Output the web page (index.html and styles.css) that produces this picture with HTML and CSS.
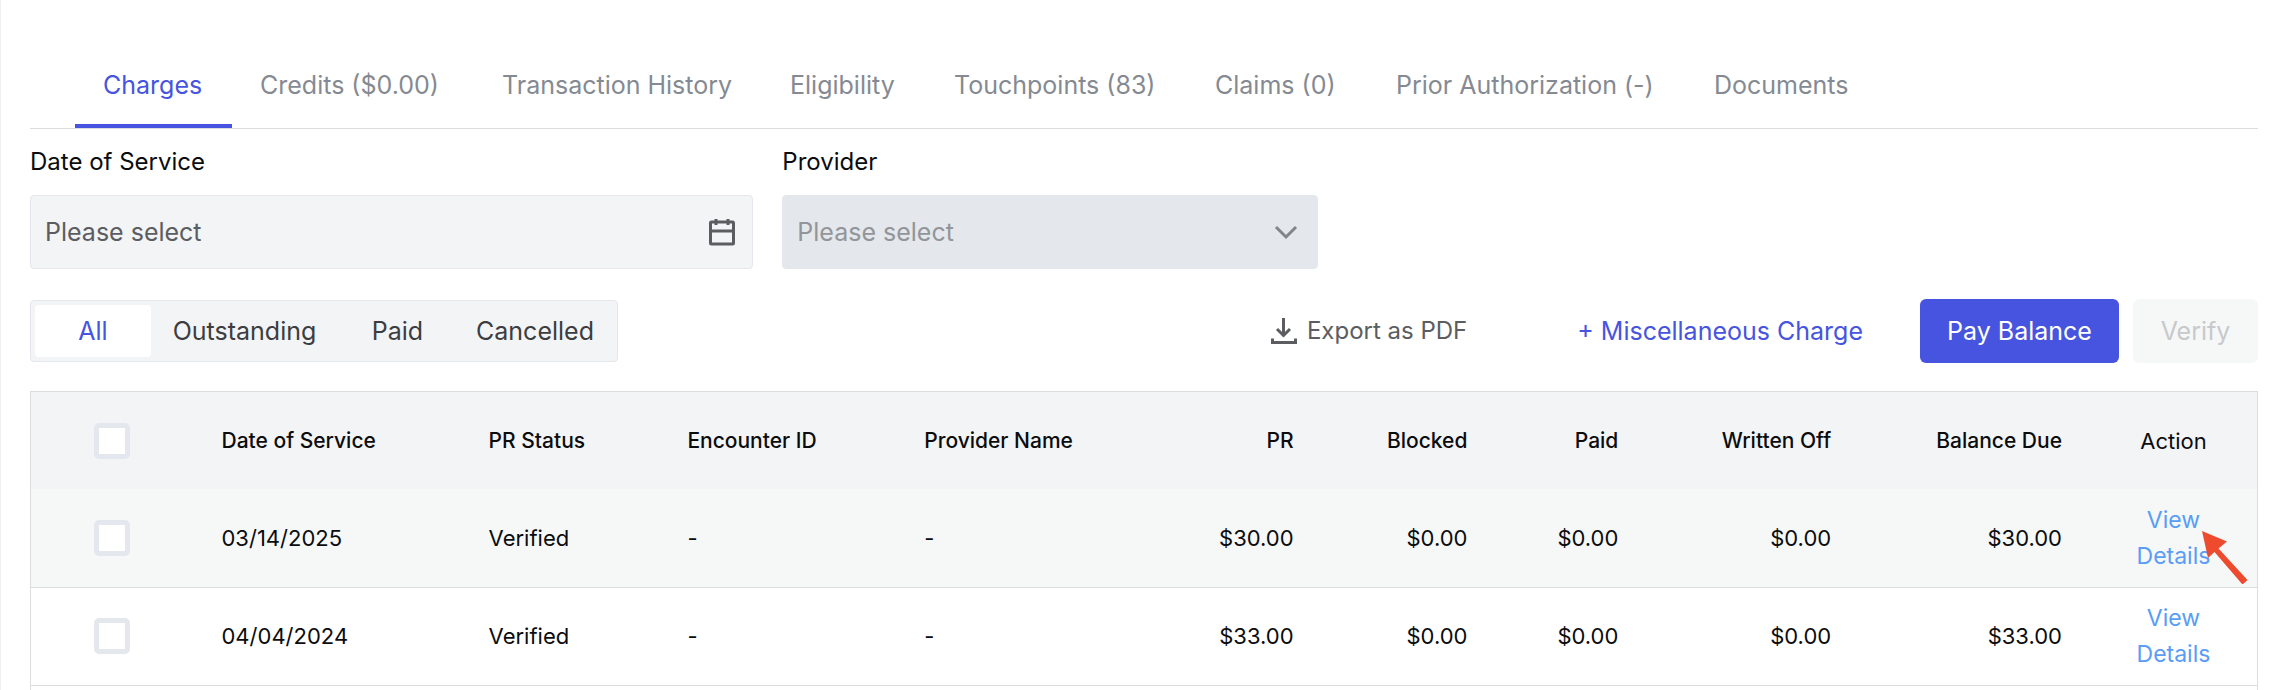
FILE: index.html
```html
<!DOCTYPE html>
<html lang="en">
<head>
<meta charset="utf-8">
<title>Charges</title>
<link rel="stylesheet" href="styles.css">
</head>
<body>
<main class="page">
  <nav class="tabs" aria-label="Patient billing">
    <a class="tab tab-active" href="#charges" aria-current="page">Charges</a>
    <a class="tab" href="#credits">Credits ($0.00)</a>
    <a class="tab" href="#history">Transaction History</a>
    <a class="tab" href="#eligibility">Eligibility</a>
    <a class="tab" href="#touchpoints">Touchpoints (83)</a>
    <a class="tab" href="#claims">Claims (0)</a>
    <a class="tab" href="#authorization">Prior Authorization (-)</a>
    <a class="tab" href="#documents">Documents</a>
  </nav>

  <form class="filters">
    <div class="field field-date">
      <label class="field-label" for="service-date">Date of Service</label>
      <div class="control">
        <input class="control-input" id="service-date" type="text" placeholder="Please select">
        <svg class="icon-calendar" viewBox="0 0 28 28" fill="none" stroke="currentColor" stroke-width="3" aria-hidden="true">
          <rect x="2.5" y="4" width="23" height="22" rx="1"/>
          <path d="M2.5 13h23M8 1v6M20 1v6"/>
        </svg>
      </div>
    </div>
    <div class="field field-provider">
      <label class="field-label" for="provider">Provider</label>
      <div class="control control-disabled">
        <select class="control-input" id="provider" disabled>
          <option>Please select</option>
        </select>
        <svg class="icon-chevron" viewBox="0 0 24 16" fill="none" stroke="currentColor" stroke-width="3" aria-hidden="true">
          <path d="M2 3l10 10 10-10"/>
        </svg>
      </div>
    </div>
  </form>

  <div class="toolbar">
    <div class="segments">
      <button class="segment segment-active" type="button">All</button>
      <button class="segment" type="button">Outstanding</button>
      <button class="segment" type="button">Paid</button>
      <button class="segment" type="button">Cancelled</button>
    </div>
    <div class="actions">
      <button class="action action-export" type="button">
        <svg class="icon-download" viewBox="0 0 26 28" fill="none" stroke="currentColor" stroke-width="3" aria-hidden="true">
          <path d="M12.500 1v17M6 12l6.500 6.500L19 12M1.500 21.500v4h23v-4"/>
        </svg>
        Export as PDF
      </button>
      <button class="action action-misc" type="button">+ Miscellaneous Charge</button>
      <button class="action action-pay" type="button">Pay Balance</button>
      <button class="action action-verify" type="button" disabled>Verify</button>
    </div>
  </div>

  <div class="table-frame">
    <table class="charges">
      <colgroup>
        <col class="col-check"><col class="col-date"><col class="col-status"><col class="col-encounter"><col class="col-provider"><col class="col-pr"><col class="col-blocked"><col class="col-paid"><col class="col-written"><col class="col-balance"><col class="col-action">
      </colgroup>
      <thead>
        <tr>
          <th class="center"><input class="check" type="checkbox" aria-label="Select all charges"></th>
          <th>Date of Service</th>
          <th>PR Status</th>
          <th>Encounter ID</th>
          <th>Provider Name</th>
          <th class="amount">PR</th>
          <th class="amount">Blocked</th>
          <th class="amount">Paid</th>
          <th class="amount">Written Off</th>
          <th class="amount">Balance Due</th>
          <th class="center light">Action</th>
        </tr>
      </thead>
      <tbody>
        <tr class="row-hover">
          <td class="center"><input class="check" type="checkbox" aria-label="Select charge 03/14/2025"></td>
          <td>03/14/2025</td>
          <td>Verified</td>
          <td>-</td>
          <td>-</td>
          <td class="amount">$30.00</td>
          <td class="amount">$0.00</td>
          <td class="amount">$0.00</td>
          <td class="amount">$0.00</td>
          <td class="amount">$30.00</td>
          <td class="center action-cell"><a class="details" href="#charge-1">View Details</a>
            <svg class="pointer" viewBox="0 0 48 54" aria-hidden="true">
              <path d="M1 1l25 10.500-8.500 7 29 31.500-5 4.500-28-32.500-6.500 6z"/>
            </svg>
          </td>
        </tr>
        <tr>
          <td class="center"><input class="check" type="checkbox" aria-label="Select charge 04/04/2024"></td>
          <td>04/04/2024</td>
          <td>Verified</td>
          <td>-</td>
          <td>-</td>
          <td class="amount">$33.00</td>
          <td class="amount">$0.00</td>
          <td class="amount">$0.00</td>
          <td class="amount">$0.00</td>
          <td class="amount">$33.00</td>
          <td class="center"><a class="details" href="#charge-2">View Details</a></td>
        </tr>
      </tbody>
    </table>
  </div>
</main>
</body>
</html>
```
FILE: styles.css
```css
* { box-sizing: border-box; }

body {
  margin: 0;
  background: #fff;
  color: #0b0c0e;
  font-family: Inter, "Liberation Sans", sans-serif;
  font-size: 25px;
  line-height: 36px;
}

button, input, select { font: inherit; color: inherit; margin: 0; }
button { border: 0; background: none; cursor: pointer; white-space: nowrap; }
svg { flex: none; display: block; }

.page {
  display: flex;
  flex-direction: column;
  min-height: 100vh;
  padding: 48px 14px 0 29px;
  border-left: 1px solid #f0f0f1;
}

.tabs {
  display: grid;
  grid-template-columns: 157px 242px 288px 164px 261px 181px 318px auto;
  justify-content: start;
  padding-left: 45px;
  border-bottom: 1px solid #dcdddf;
}
.tab {
  padding: 19px 0 21px 28px;
  border-bottom: 4px solid transparent;
  color: #858a92;
  text-decoration: none;
  white-space: nowrap;
}
.tab-active { color: #4754df; border-bottom-color: #4754df; }

.filters {
  display: grid;
  grid-template-columns: repeat(12, 1fr);
  gap: 29px;
  padding-top: 15px;
}
.field { display: flex; flex-direction: column; gap: 15px; }
.field-label { font-size: 24px; }
.field-date { grid-column: span 4; }
.field-provider { grid-column: span 3; }
.control {
  display: flex;
  align-items: center;
  height: 74px;
  padding: 0 16px 0 14px;
  border: 1px solid #e4e7eb;
  border-radius: 4px;
  background: #f3f4f6;
  color: #5b5d61;
}
.control-disabled { background: #e4e7eb; color: #929599; padding-right: 19px; }
.control-input {
  flex: 1;
  min-width: 0;
  height: 100%;
  padding: 0;
  border: 0;
  outline: 0;
  background: none;
  appearance: none;
  opacity: 1;
}
.control-input::placeholder { color: #5b5d61; opacity: 1; }
.icon-calendar { width: 28px; height: 28px; }
.icon-chevron { width: 24px; height: 16px; color: #818488; }

.toolbar {
  display: flex;
  align-items: center;
  justify-content: space-between;
  padding: 30px 0 28px;
}
.segments {
  display: grid;
  grid-template-columns: 116px 187px 119px 156px;
  padding: 4px;
  border: 1px solid #e4e7eb;
  border-radius: 4px;
  background: #f3f4f6;
  color: #3c3d40;
}
.segment { padding: 8px 0; border-radius: 4px; }
.segment-active { background: #fff; color: #4754df; }
.actions { display: flex; align-items: center; }
.action { padding: 14px 28px; border-radius: 6px; }
.action-export { display: flex; align-items: center; gap: 10px; padding-right: 82px; color: #5b5d61; font-size: 24px; }
.icon-download { width: 26px; height: 28px; }
.action-misc { margin-right: 29px; color: #4754df; }
.action-pay { width: 199px; padding: 14px 0; background: #4754df; color: #fff; }
.action-verify { width: 125px; padding: 14px 0; margin-left: 14px; background: #f6f8f8; color: #c7c9cc; }

.table-frame {
  flex: 1;
  border: 1px solid #dcdddf;
  border-bottom: 0;
}
.charges {
  width: 100%;
  border-collapse: collapse;
  table-layout: fixed;
  font-size: 22px;
}
.col-check { width: 7.3%; }
.col-date { width: 12%; }
.col-status { width: 8.93%; }
.col-encounter { width: 10.64%; }
.col-provider { width: 13.1%; }
.col-pr { width: 6.01%; }
.col-blocked { width: 7.81%; }
.col-paid { width: 6.78%; }
.col-written { width: 9.56%; }
.col-balance { width: 10.37%; }
.charges th, .charges td {
  height: 98px;
  padding: 0 28px;
  text-align: left;
  vertical-align: middle;
  white-space: nowrap;
}
.charges th { height: 97px; background: #f3f4f6; font-size: 21px; font-weight: 500; }
.charges th.light { font-size: 22px; font-weight: 400; }
.charges td { border-bottom: 1px solid #dcdddf; }
.charges .amount { text-align: right; }
.charges .center { text-align: center; white-space: normal; }
.row-hover { background: #f6f8f8; }
.check {
  display: block;
  width: 36px;
  height: 36px;
  margin: 0 auto;
  border: 5px solid #e4e7ed;
  border-radius: 5px;
  background: #fff;
  appearance: none;
}
.details { color: #599df5; font-size: 23px; text-decoration: none; }
.action-cell { position: relative; }
.pointer {
  position: absolute;
  top: 41px;
  right: 8px;
  width: 48px;
  height: 54px;
  fill: #ee4a2e;
}
```
